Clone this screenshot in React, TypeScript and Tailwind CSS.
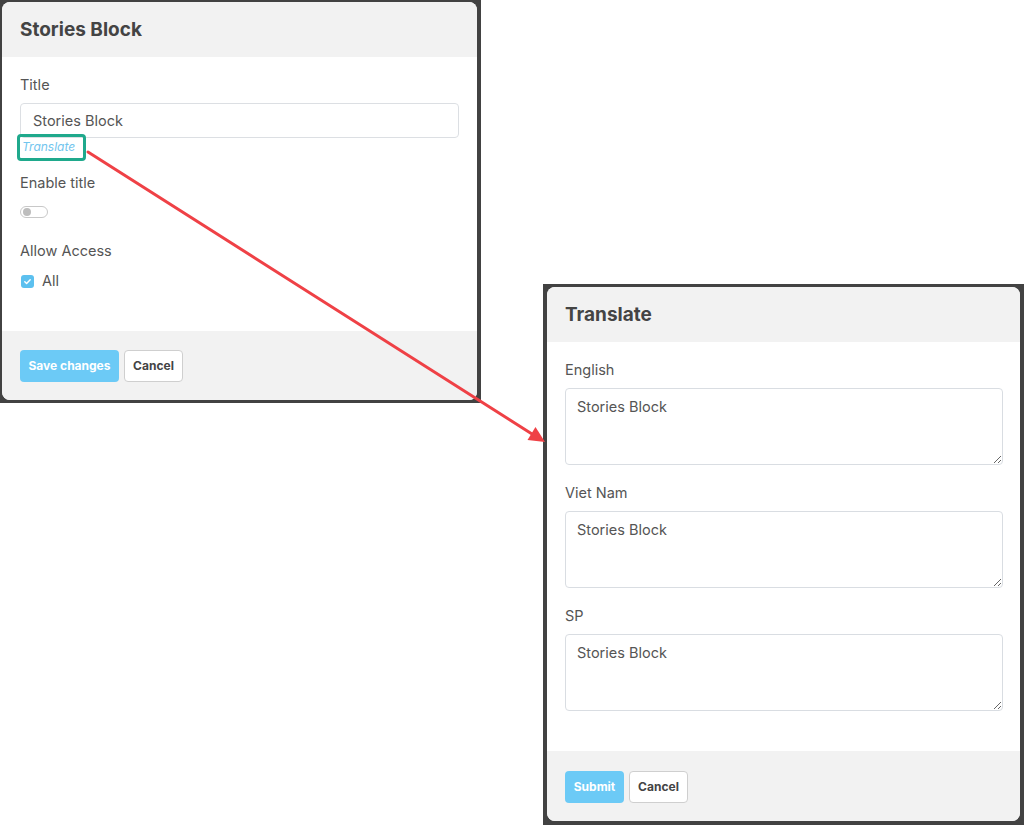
import React from "react";

const FONT = "font-['Inter','Noto_Sans',sans-serif]";

function Frame({ className, children }: { className: string; children: React.ReactNode }) {
  return (
    <div className={`bg-[#424242] ${className}`}>
      <div className="flex h-full flex-col overflow-hidden rounded-lg bg-white">{children}</div>
    </div>
  );
}

function Header({ title }: { title: string }) {
  return (
    <div className="flex h-[55px] shrink-0 items-center bg-[#f2f2f2] px-[18px] pt-px">
      <h2 className="text-[19px] font-bold text-[#444]">{title}</h2>
    </div>
  );
}

function Label({ children }: { children: React.ReactNode }) {
  return <p className="text-[14.5px] leading-5 text-[#555]">{children}</p>;
}

function Btn({ primary, w, children }: { primary?: boolean; w: string; children: React.ReactNode }) {
  return primary ? (
    <button className={`h-[32px] rounded-[4px] bg-[#6ccaf6] text-[12px] font-bold text-white ${w}`}>
      {children}
    </button>
  ) : (
    <button className={`h-[32px] rounded-[4px] border border-[#cfcfcf] bg-white text-[12px] font-bold text-[#444] ${w}`}>
      {children}
    </button>
  );
}

function TextBox({ value }: { value: string }) {
  return (
    <textarea
      readOnly
      defaultValue={value}
      className="mt-[8px] block h-[77px] w-[438px] rounded-[4px] border border-[#d9dde2] px-[11px] py-[8px] text-[14.5px] leading-5 text-[#555] outline-none"
    />
  );
}

export default function App() {
  return (
    <div className={`relative flex h-[825px] w-[1024px] items-start overflow-hidden bg-white ${FONT}`}>
      {/* Stories Block modal */}
      <Frame className="h-[403px] w-[481px] p-[2px] pr-[4px] pb-[3px]">
        <Header title="Stories Block" />
        <div className="flex-1 px-[18px] pt-[18px]">
          <Label>Title</Label>
          <div className="mt-2 flex h-[35px] w-[439px] items-center rounded-[4px] border border-[#dcdfe3] px-[12px] text-[14.5px] text-[#555]">
            Stories Block
          </div>
          <div className="mt-px flex h-4 items-center pl-[2px] text-[12px] leading-4">
            <span className="relative block italic text-[#72c5ee]">
              Translate
              <span className="absolute -left-[5px] -top-[5px] h-[27px] w-[69px] rounded-[4px] border-[3px] border-[#1fa98c]" />
            </span>
          </div>
          <div className="mt-[18px]">
            <Label>Enable title</Label>
          </div>
          <div className="mt-[13px] flex h-[12px] w-[28px] items-center rounded-full border border-[#c8c8c8] bg-white pl-[2px]">
            <span className="h-[8px] w-[8px] rounded-full bg-[#bdbdbd]" />
          </div>
          <div className="mt-[23px]">
            <Label>Allow Access</Label>
          </div>
          <div className="mt-[10px] flex items-center gap-[8px] pl-px">
            <span className="flex h-[13px] w-[13px] items-center justify-center rounded-[3px] bg-[#5cc0ef]">
              <svg width="9" height="9" viewBox="0 0 10 10" fill="none">
                <path d="M2 5.2l2 2L8 3" stroke="white" strokeWidth="1.6" strokeLinecap="round" strokeLinejoin="round" />
              </svg>
            </span>
            <span className="text-[14.5px] leading-5 text-[#555]">All</span>
          </div>
        </div>
        <div className="flex h-[69px] shrink-0 items-start gap-[5px] bg-[#f2f2f2] px-[18px] pt-[19px]">
          <Btn primary w="w-[99px]">Save changes</Btn>
          <Btn w="w-[59px]">Cancel</Btn>
        </div>
      </Frame>

      {/* Translate modal */}
      <Frame className="ml-[62px] mt-[284px] h-[541px] w-[481px] pl-[4px] pt-[3px] pr-[4px] pb-[4px]">
        <Header title="Translate" />
        <div className="flex-1 px-[18px] pt-[18px]">
          <Label>English</Label>
          <TextBox value="Stories Block" />
          <div className="mt-[18px]">
            <Label>Viet Nam</Label>
          </div>
          <TextBox value="Stories Block" />
          <div className="mt-[18px]">
            <Label>SP</Label>
          </div>
          <TextBox value="Stories Block" />
        </div>
        <div className="flex h-[70px] shrink-0 items-start gap-[5px] bg-[#f2f2f2] px-[18px] pt-[20px]">
          <Btn primary w="w-[59px]">Submit</Btn>
          <Btn w="w-[59px]">Cancel</Btn>
        </div>
      </Frame>

      {/* annotation arrow */}
      <svg className="pointer-events-none absolute left-0 top-0" width="1024" height="825" viewBox="0 0 1024 825">
        <line x1="88" y1="152" x2="532" y2="434" stroke="#ef4146" strokeWidth="3" strokeLinecap="round" />
        <polygon points="545,442 527.5,440 535.5,427" fill="#ef4146" />
      </svg>
    </div>
  );
}
